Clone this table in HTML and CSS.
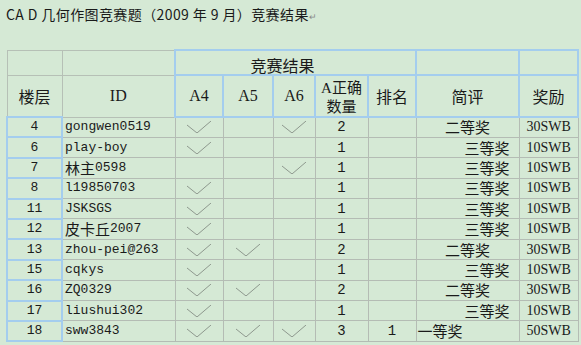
FILE: index.html
```html
<!DOCTYPE html>
<html lang="zh">
<head>
<meta charset="utf-8">
<link rel="stylesheet" href="styles.css">
</head>
<body>
<div class="page">
  <p class="title">CA D 几何作图竞赛题（2009 年 9 月）竞赛结果<span class="ret">↵</span></p>
  <table class="grid">
    <colgroup>
      <col class="c-floor"><col class="c-id"><col class="c-a4"><col class="c-a5"><col class="c-a6"><col class="c-cnt"><col class="c-rank"><col class="c-note"><col class="c-prize">
    </colgroup>
    <thead>
      <tr class="h1">
        <th class="hg"></th>
        <th class="hg"></th>
        <th class="hb group" colspan="5">竞赛结果</th>
        <th class="hb"></th>
        <th class="hb"></th>
      </tr>
      <tr class="h2">
        <th class="hg">楼层</th>
        <th class="hg lat">ID</th>
        <th class="hb lat">A4</th>
        <th class="hb lat">A5</th>
        <th class="hb lat">A6</th>
        <th class="hb cnt"><span class="lat">A</span>正确<br>数量</th>
        <th class="hb">排名</th>
        <th class="hb">简评</th>
        <th class="hb">奖励</th>
      </tr>
    </thead>
    <tbody>
      <tr class="first">
        <td class="fl">4</td><td class="id">gongwen0519</td>
        <td class="ck"><svg viewBox="0 0 24 12"><polyline points="0,4 10,12 24,0"/></svg></td><td></td>
        <td class="ck"><svg viewBox="0 0 24 12"><polyline points="0,4 10,12 24,0"/></svg></td>
        <td class="num">2</td><td></td><td class="note ctr">二等奖</td><td class="prize">30SWB</td>
      </tr>
      <tr>
        <td class="fl">6</td><td class="id">play-boy</td>
        <td class="ck"><svg viewBox="0 0 24 12"><polyline points="0,4 10,12 24,0"/></svg></td><td></td><td></td>
        <td class="num">1</td><td></td><td class="note rt">三等奖</td><td class="prize">10SWB</td>
      </tr>
      <tr>
        <td class="fl">7</td><td class="id"><span class="cj">林主</span>0598</td>
        <td></td><td></td>
        <td class="ck"><svg viewBox="0 0 24 12"><polyline points="0,4 10,12 24,0"/></svg></td>
        <td class="num">1</td><td></td><td class="note rt">三等奖</td><td class="prize">10SWB</td>
      </tr>
      <tr>
        <td class="fl">8</td><td class="id">l19850703</td>
        <td class="ck"><svg viewBox="0 0 24 12"><polyline points="0,4 10,12 24,0"/></svg></td><td></td><td></td>
        <td class="num">1</td><td></td><td class="note rt">三等奖</td><td class="prize">10SWB</td>
      </tr>
      <tr>
        <td class="fl">11</td><td class="id">JSKSGS</td>
        <td class="ck"><svg viewBox="0 0 24 12"><polyline points="0,4 10,12 24,0"/></svg></td><td></td><td></td>
        <td class="num">1</td><td></td><td class="note rt">三等奖</td><td class="prize">10SWB</td>
      </tr>
      <tr>
        <td class="fl">12</td><td class="id"><span class="cj">皮卡丘</span>2007</td>
        <td class="ck"><svg viewBox="0 0 24 12"><polyline points="0,4 10,12 24,0"/></svg></td><td></td><td></td>
        <td class="num">1</td><td></td><td class="note rt">三等奖</td><td class="prize">10SWB</td>
      </tr>
      <tr>
        <td class="fl">13</td><td class="id">zhou-pei@263</td>
        <td class="ck"><svg viewBox="0 0 24 12"><polyline points="0,4 10,12 24,0"/></svg></td>
        <td class="ck"><svg viewBox="0 0 24 12"><polyline points="0,4 10,12 24,0"/></svg></td><td></td>
        <td class="num">2</td><td></td><td class="note ctr">二等奖</td><td class="prize">30SWB</td>
      </tr>
      <tr>
        <td class="fl">15</td><td class="id">cqkys</td>
        <td class="ck"><svg viewBox="0 0 24 12"><polyline points="0,4 10,12 24,0"/></svg></td><td></td><td></td>
        <td class="num">1</td><td></td><td class="note rt">三等奖</td><td class="prize">10SWB</td>
      </tr>
      <tr>
        <td class="fl">16</td><td class="id">ZQ0329</td>
        <td class="ck"><svg viewBox="0 0 24 12"><polyline points="0,4 10,12 24,0"/></svg></td>
        <td class="ck"><svg viewBox="0 0 24 12"><polyline points="0,4 10,12 24,0"/></svg></td><td></td>
        <td class="num">2</td><td></td><td class="note ctr">二等奖</td><td class="prize">30SWB</td>
      </tr>
      <tr>
        <td class="fl">17</td><td class="id">liushui302</td>
        <td class="ck"><svg viewBox="0 0 24 12"><polyline points="0,4 10,12 24,0"/></svg></td><td></td><td></td>
        <td class="num">1</td><td></td><td class="note rt">三等奖</td><td class="prize">10SWB</td>
      </tr>
      <tr>
        <td class="fl">18</td><td class="id">sww3843</td>
        <td class="ck"><svg viewBox="0 0 24 12"><polyline points="0,4 10,12 24,0"/></svg></td>
        <td class="ck"><svg viewBox="0 0 24 12"><polyline points="0,4 10,12 24,0"/></svg></td>
        <td class="ck"><svg viewBox="0 0 24 12"><polyline points="0,4 10,12 24,0"/></svg></td>
        <td class="num">3</td><td class="num">1</td><td class="note lf">一等奖</td><td class="prize">50SWB</td>
      </tr>
    </tbody>
  </table>
</div>
</body>
</html>
```

FILE: styles.css
```css
html, body {
  margin: 0;
  padding: 0;
  background: #d5e9d5;
}
.page {
  width: 581px;
  height: 345px;
  overflow: hidden;
  padding: 6px 0 0 6px;
  box-sizing: border-box;
  color: #1a1a1a;
  font-family: "Noto Sans CJK SC", sans-serif;
}
.title {
  margin: 0 0 24px 0;
  font-size: 14px;
  line-height: 17px;
  letter-spacing: 0.4px;
  white-space: nowrap;
}
.ret {
  color: #8a8a8a;
  font-size: 9px;
}
.grid {
  border-collapse: collapse;
  table-layout: fixed;
  width: 571px;
}
.c-floor { width: 55px; }
.c-id { width: 113px; }
.c-a4 { width: 48px; }
.c-a5 { width: 50px; }
.c-a6 { width: 42px; }
.c-cnt { width: 53px; }
.c-rank { width: 48px; }
.c-note { width: 103px; }
.c-prize { width: 59px; }

th {
  font-weight: normal;
  font-size: 16px;
  padding: 0;
  text-align: center;
  line-height: 18px;
}
.hg { border: 1px solid #b6c0b6; }
.hb { border: 2px solid #a4cdee; }
.h1 th { height: 23px; vertical-align: bottom; }
.h2 th { height: 40px; vertical-align: middle; }
.group { padding-right: 26px; }
.lat { font-family: "Liberation Serif", serif; }
.cnt { font-size: 15px; line-height: 17px; }

td {
  height: 18.4px;
  padding: 0;
  border: 1px solid #b4bcb4;
  font-family: "Liberation Mono", "Noto Sans CJK SC", monospace;
  font-size: 13px;
  line-height: 18px;
  white-space: nowrap;
  overflow: hidden;
}
td.fl {
  text-align: center;
  border-left: 2px solid #a4cdee;
  border-right: 2px solid #a4cdee;
  border-bottom: 2px solid #a4cdee;
}
tr.first td.fl { border-top: 2px solid #a4cdee; }
td.id { padding-left: 2px; }
td.num { text-align: center; font-size: 14px; }
td.note {
  font-family: "Noto Sans CJK SC", sans-serif;
  font-size: 15px;
  line-height: 18px;
}
td.ctr { text-align: center; }
td.rt { text-align: right; padding-right: 9px; }
td.lf { text-align: left; padding-left: 1px; }
td.prize {
  text-align: center;
  font-family: "Liberation Serif", serif;
  font-size: 14px;
}
.cj {
  font-family: "Noto Sans CJK SC", sans-serif;
  font-size: 15px;
  line-height: 18px;
  vertical-align: top;
}
td.ck { text-align: center; line-height: 0; }
td.ck svg {
  width: 24px;
  height: 12px;
  fill: none;
  stroke: #8d978d;
  stroke-width: 1;
  vertical-align: middle;
}
```
